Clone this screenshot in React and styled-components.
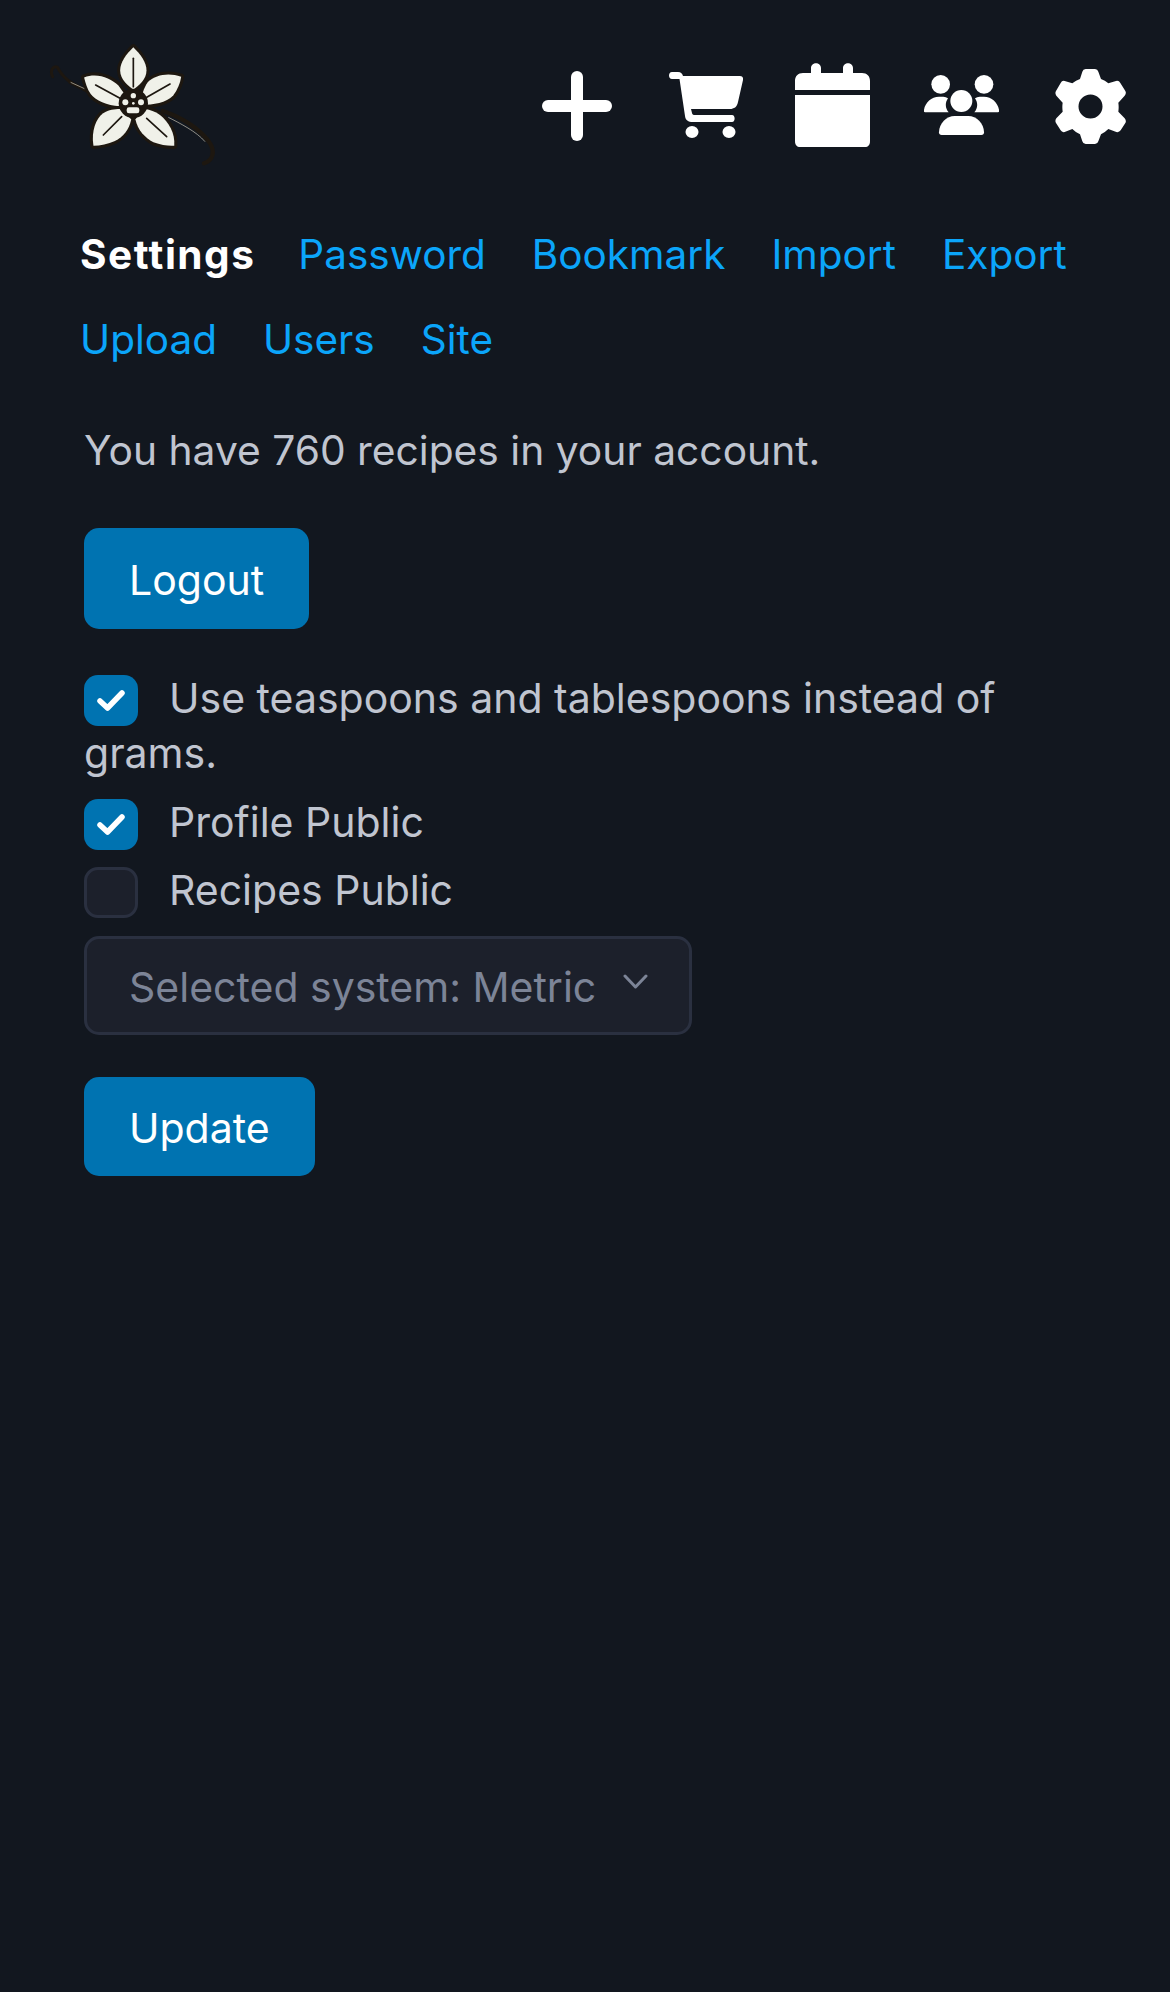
import React from "react";
import styled, { createGlobalStyle } from "styled-components";

const GlobalStyle = createGlobalStyle`
  html, body {
    margin: 0;
    background: #12171f;
  }
  body {
    min-height: 1992px;
    font-family: Inter, "Liberation Sans", sans-serif;
    font-size: 41px;
    color: #c0c5d0;
  }
`;

const Header = styled.header`
  display: flex;
  justify-content: space-between;
  padding: 30px 44px 0 30px;
  height: 150px;
`;

const LogoSvg = styled.svg`
  width: 210px;
  height: 150px;
`;

const IconRow = styled.nav`
  display: flex;
  align-items: flex-start;
`;

const IconSvg = styled.svg`
  display: block;
  width: ${(p) => p.$w}px;
  height: ${(p) => p.$h}px;
  margin-top: ${(p) => p.$top}px;
  margin-left: ${(p) => p.$gap || 0}px;
  fill: #fff;
`;

const Main = styled.main`
  padding: 33px 60px 0 84px;
`;

const Tabs = styled.div`
  display: flex;
  flex-wrap: wrap;
  column-gap: 46px;
  margin-left: -4px;
  font-size: 40.5px;
  line-height: 84.5px;
`;

const Tab = styled.a`
  color: ${(p) => (p.$active ? "#fff" : "#0ba5fa")};
  font-weight: ${(p) => (p.$active ? 700 : 400)};
  letter-spacing: ${(p) => (p.$active ? "1.5px" : "0")};
  margin-right: ${(p) => (p.$active ? "-3px" : "0")};
  text-decoration: none;
`;

const Summary = styled.p`
  margin: 42px 0 50px;
  font-size: 40.75px;
  line-height: 54px;
`;

const Button = styled.button`
  display: block;
  height: ${(p) => p.$h}px;
  padding: 2px 45px 0;
  border: 0;
  border-radius: 15px;
  background: #0073b1;
  color: #fff;
  font: inherit;
`;

const Options = styled.div`
  margin-top: 42px;
`;

const CheckLabel = styled.label`
  display: block;
  margin-bottom: 13.5px;
  line-height: 55px;
`;

const Box = styled.span`
  display: inline-block;
  overflow: hidden;
  box-sizing: border-box;
  width: 54px;
  height: 51px;
  margin-right: 31px;
  vertical-align: -13px;
  border-radius: 14px;
  background: ${(p) => (p.$checked ? "#0073b1" : "#1c202b")};
  border: ${(p) => (p.$checked ? "0" : "3px solid #2a3040")};
`;

const CheckMark = styled.svg`
  display: block;
  width: 28px;
  height: 22px;
  margin: 14px auto 0;
  fill: none;
  stroke: #fff;
  stroke-width: 5.5;
  stroke-linecap: round;
  stroke-linejoin: round;
`;

const Select = styled.div`
  display: flex;
  align-items: center;
  justify-content: space-between;
  box-sizing: border-box;
  width: 608px;
  height: 99px;
  padding: 2px 41px 0 42px;
  margin: 18px 0 42px;
  border: 3px solid #2a3040;
  border-radius: 15px;
  background: #1c202b;
  color: #7c8497;
`;

const Chevron = styled.svg`
  width: 25px;
  height: 15px;
  margin-bottom: 10px;
  fill: none;
  stroke: #7c8497;
  stroke-width: 3;
  stroke-linecap: round;
  stroke-linejoin: round;
`;

const Logo = () => (
  <LogoSvg viewBox="0 0 630 450">
    <g fill="none" stroke="#1d1710" strokeLinecap="round">
      <path d="M68 140 C58 120 72 105 82 112 C90 125 100 145 125 158" strokeWidth="9" />
      <path d="M120 157 L170 182" strokeWidth="10" />
      <path d="M398 243 C450 260 510 295 540 340 C555 365 550 390 522 400" strokeWidth="13" />
    </g>
    <g fill="none" stroke="#cfc9b8" strokeWidth="2">
      <path d="M122 157 L168 178" />
      <path d="M415 262 C450 280 500 305 525 335" />
    </g>
    <g
      transform="translate(310 210) scale(1.04) translate(-310 -210)"
      fill="#f0f1e9"
      stroke="#1d1710"
      strokeWidth="18"
      strokeLinejoin="round"
      paintOrder="stroke"
    >
      <path d="M310 58 C290 78 272 100 272 125 C272 150 295 170 310 180 C325 170 348 150 348 125 C348 100 330 78 310 58 Z" />
      <path d="M448 143 C410 130 375 138 352 158 C340 175 333 195 333 224 C368 224 405 218 425 197 C438 180 445 162 448 143 Z" />
      <path d="M168 145 C205 130 245 147 267 168 L286 195 C280 210 274 220 270 228 C235 228 200 210 187 193 C177 178 172 162 168 145 Z" />
      <path d="M195 342 C188 300 202 263 223 248 C240 238 255 236 272 236 C287 248 297 258 304 266 C297 297 282 315 257 328 C237 337 215 341 195 342 Z" />
      <path d="M428 342 C431 305 412 273 387 253 C372 243 358 238 345 236 C333 245 323 255 316 266 C323 297 343 318 368 332 C390 340 410 343 428 342 Z" />
    </g>
    <g fill="none" stroke="#1d1710" strokeWidth="5" strokeLinecap="round">
      <path d="M310 85 V170" />
      <path d="M420 162 L345 205" />
      <path d="M197 165 L270 205" />
      <path d="M220 315 L275 260" />
      <path d="M350 265 L410 320" />
    </g>
    <circle cx="310" cy="220" r="44" fill="#1d1710" />
    <g fill="#f0f1e9">
      <circle cx="286" cy="217" r="9" />
      <circle cx="333" cy="217" r="9" />
      <circle cx="310" cy="197" r="8" />
      <circle cx="310" cy="220" r="4" />
      <rect x="290" y="232" width="38" height="18" rx="7" />
    </g>
  </LogoSvg>
);

const TopIcons = () => (
  <IconRow>
    <IconSvg $w={70} $h={70} $top={41} viewBox="0 0 70 70">
      <rect x="0" y="29" width="70" height="12" rx="6" />
      <rect x="29" y="0" width="12" height="70" rx="6" />
    </IconSvg>
    <IconSvg $w={74} $h={66} $top={42} $gap={57} viewBox="0 0 74 66">
      <path d="M3 0 H9 C12 0 13.5 2 14 4 H71 C73.5 4 74.5 6 74 8 L69 30 C68 35 65 37 61 37 H22 L23 41 C23.3 42.5 24 43 26 43 H63 C66.5 43 66.5 50 63 50 H24 C19 50 16.5 48 16 44 L10.5 7 H3 C-1 7 -1 0 3 0 Z" />
      <ellipse cx="23" cy="60" rx="6.5" ry="6" />
      <ellipse cx="60" cy="60" rx="6.5" ry="6" />
    </IconSvg>
    <IconSvg $w={75} $h={84} $top={33} $gap={52} viewBox="0 0 75 84">
      <path d="M16 5 C16 -1.5 26 -1.5 26 5 V10 H48 V5 C48 -1.5 58 -1.5 58 5 V10 H67 C72 10 75 13 75 18 V27 H0 V18 C0 13 3 10 8 10 H16 Z" />
      <path d="M0 32 H75 V78 C75 82 73 84 70 84 H5 C2 84 0 82 0 78 Z" />
    </IconSvg>
    <IconSvg $w={75} $h={60} $top={45} $gap={54} viewBox="0 0 225 180">
      <circle cx="50" cy="28" r="28" />
      <circle cx="180" cy="28" r="28" />
      <circle cx="112" cy="78" r="33" />
      <path d="M3 112 Q-2 112 0 104 C4 82 22 65 45 65 H58 Q66 65 72 70 C62 85 64 100 74 112 Z" />
      <path d="M222 112 Q227 112 225 104 C221 82 203 65 180 65 H167 Q159 65 153 70 C163 85 161 100 151 112 Z" />
      <path d="M45 172 C45 145 68 123 92 123 H133 C157 123 180 145 180 172 Q180 180 172 180 H53 Q45 180 45 172 Z" />
    </IconSvg>
    <IconSvg $w={71} $h={75} $top={39} $gap={56} viewBox="0 0 213 225">
      <path
        fillRule="evenodd"
        d="M92 0 H120 Q128 0 130 8 L138 30 Q150 34 160 43 L183 36 Q192 34 196 42 L211 66 Q215 73 209 80 L190 101 Q192 114 190 128 L209 148 Q215 155 211 162 L197 184 Q192 191 184 189 L160 180 Q150 190 138 196 L130 217 Q128 225 120 225 H92 Q84 225 82 217 L75 196 Q63 191 52 180 L29 189 Q21 191 17 184 L3 162 Q-1 155 4 148 L23 128 Q21 114 23 101 L4 80 Q-1 73 3 66 L17 42 Q21 34 29 36 L52 43 Q63 34 75 30 L82 8 Q84 0 92 0 Z M106.5 76.5 A36 36 0 1 0 106.5 148.5 A36 36 0 1 0 106.5 76.5 Z"
      />
    </IconSvg>
  </IconRow>
);

const Check = () => (
  <CheckMark viewBox="0 0 28 22">
    <path d="M3 12 L10.5 19 L25 4" />
  </CheckMark>
);

const App = () => {
  return (
    <>
      <GlobalStyle />
      <Header>
        <Logo />
        <TopIcons />
      </Header>
      <Main>
        <Tabs>
          <Tab $active>Settings</Tab>
          <Tab>Password</Tab>
          <Tab>Bookmark</Tab>
          <Tab>Import</Tab>
          <Tab>Export</Tab>
          <Tab>Upload</Tab>
          <Tab>Users</Tab>
          <Tab>Site</Tab>
        </Tabs>
        <Summary>You have 760 recipes in your account.</Summary>
        <Button $h={101}>Logout</Button>
        <Options>
          <CheckLabel>
            <Box $checked>
              <Check />
            </Box>
            Use teaspoons and tablespoons instead of grams.
          </CheckLabel>
          <CheckLabel>
            <Box $checked>
              <Check />
            </Box>
            Profile Public
          </CheckLabel>
          <CheckLabel>
            <Box />
            Recipes Public
          </CheckLabel>
        </Options>
        <Select>
          Selected system: Metric
          <Chevron viewBox="0 0 25 15">
            <path d="M2 2 L12.5 13 L23 2" />
          </Chevron>
        </Select>
        <Button $h={99}>Update</Button>
      </Main>
    </>
  );
};

export default App;
